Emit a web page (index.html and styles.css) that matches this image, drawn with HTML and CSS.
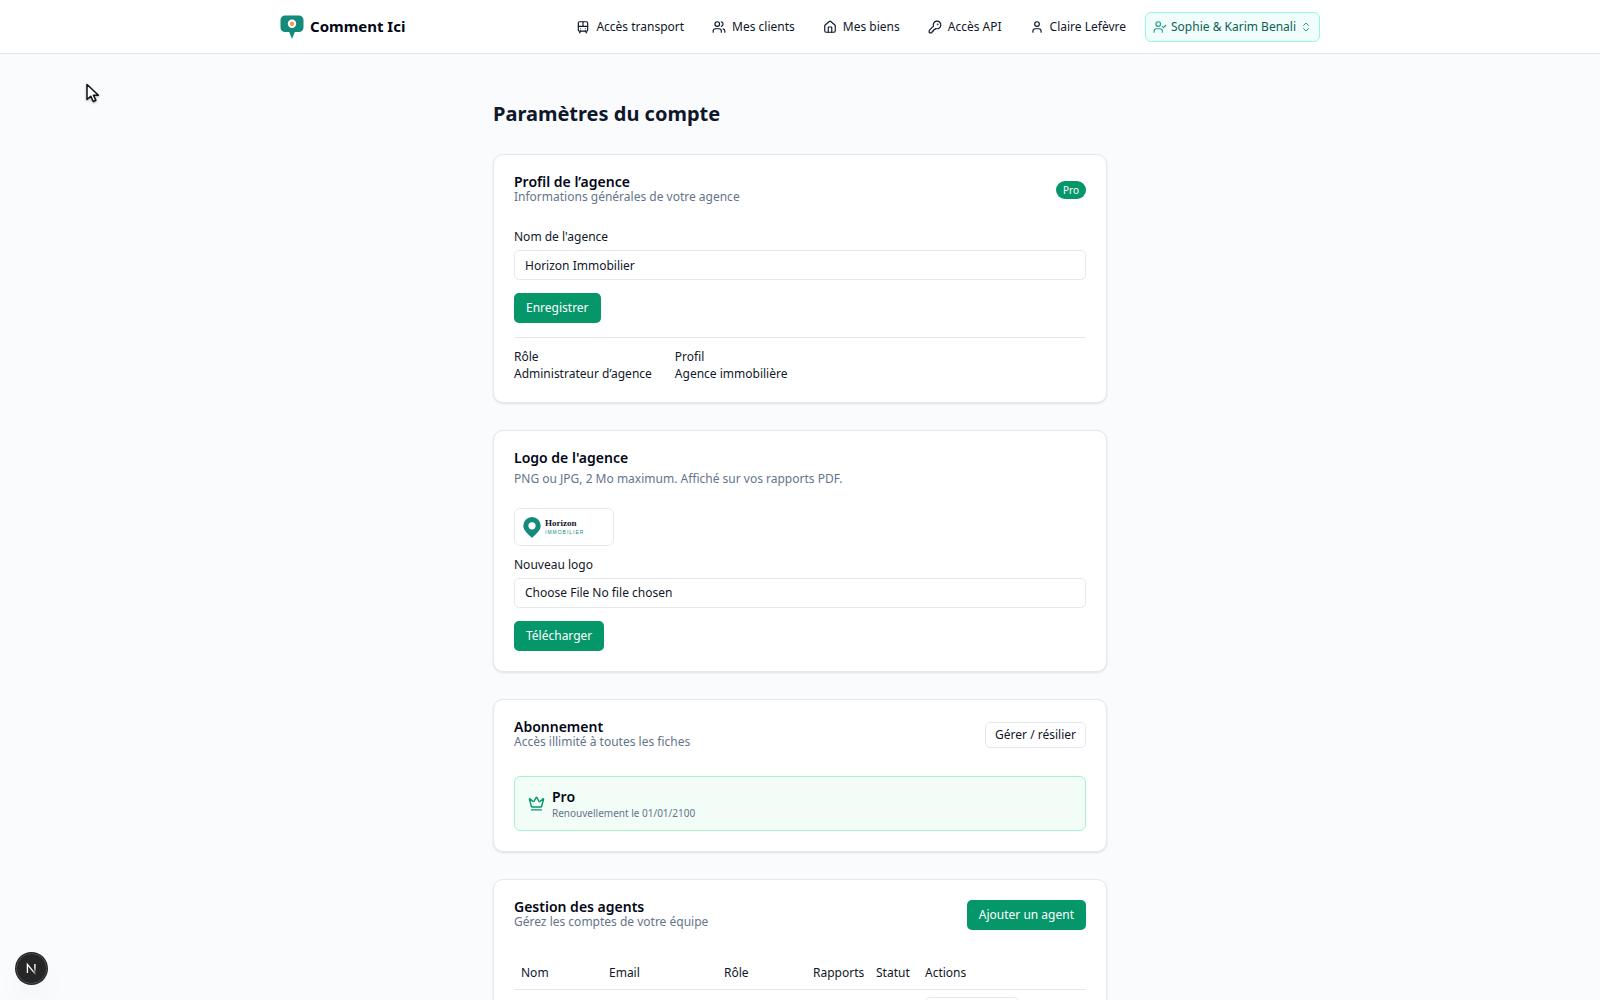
FILE: index.html
```html
<!DOCTYPE html>
<html lang="fr">
<head>
    <meta charset="UTF-8">
    <meta name="viewport" content="width=device-width, initial-scale=1.0">
    <title>Paramètres du compte</title>
    <link rel="stylesheet" href="styles.css">
</head>
<body>
    <header class="site-header">
        <div class="header-inner">
            <a href="#" class="brand">
                <svg class="brand-icon" viewBox="0 0 24 24">
                    <path d="M5 0.500h14a4.500 4.500 0 0 1 4.500 4.500v7.500a4.500 4.500 0 0 1-4.500 4.500h-4.200L12 24l-2.800-7H5a4.500 4.500 0 0 1-4.500-4.500V5A4.500 4.500 0 0 1 5 0.500z" fill="#148a7b"/>
                    <circle cx="12" cy="8.700" r="4.200" fill="#fff"/>
                    <circle cx="12" cy="8.700" r="2.200" fill="#ee9b4a"/>
                </svg>
                Comment Ici
            </a>

            <nav class="nav">
                <a href="#" class="nav-link">
                    <svg class="icon" viewBox="0 0 24 24"><rect width="16" height="16" x="4" y="3" rx="2"/><path d="M4 11h16"/><path d="M12 3v8"/><path d="m8 19-2 3"/><path d="m18 22-2-3"/><path d="M8 15h.01"/><path d="M16 15h.01"/></svg>
                    Accès transport
                </a>
                <a href="#" class="nav-link">
                    <svg class="icon" viewBox="0 0 24 24"><path d="M16 21v-2a4 4 0 0 0-4-4H6a4 4 0 0 0-4 4v2"/><circle cx="9" cy="7" r="4"/><path d="M22 21v-2a4 4 0 0 0-3-3.870"/><path d="M16 3.130a4 4 0 0 1 0 7.750"/></svg>
                    Mes clients
                </a>
                <a href="#" class="nav-link">
                    <svg class="icon" viewBox="0 0 24 24"><path d="M15 21v-8a1 1 0 0 0-1-1h-4a1 1 0 0 0-1 1v8"/><path d="M3 10a2 2 0 0 1 .709-1.528l7-5.999a2 2 0 0 1 2.582 0l7 5.999A2 2 0 0 1 21 10v9a2 2 0 0 1-2 2H5a2 2 0 0 1-2-2z"/></svg>
                    Mes biens
                </a>
                <a href="#" class="nav-link">
                    <svg class="icon" viewBox="0 0 24 24"><path d="M2.586 17.414A2 2 0 0 0 2 18.828V21a1 1 0 0 0 1 1h3a1 1 0 0 0 1-1v-1a1 1 0 0 1 1-1h1a1 1 0 0 0 1-1v-1a1 1 0 0 1 1-1h.172a2 2 0 0 0 1.414-.586l.814-.814a6.500 6.500 0 1 0-4-4z"/><circle cx="16.500" cy="7.500" r=".5"/></svg>
                    Accès API
                </a>
                <a href="#" class="nav-link">
                    <svg class="icon" viewBox="0 0 24 24"><path d="M19 21v-2a4 4 0 0 0-4-4H9a4 4 0 0 0-4 4v2"/><circle cx="12" cy="7" r="4"/></svg>
                    Claire Lefèvre
                </a>
                <button type="button" class="client-switch">
                    <svg class="icon" viewBox="0 0 24 24"><path d="M16 21v-2a4 4 0 0 0-4-4H6a4 4 0 0 0-4 4v2"/><circle cx="9" cy="7" r="4"/><path d="m16 11 2 2 4-4"/></svg>
                    <span>Sophie &amp; Karim Benali</span>
                    <svg class="icon chevrons" viewBox="0 0 24 24"><path d="m7 15 5 5 5-5"/><path d="m7 9 5-5 5 5"/></svg>
                </button>
            </nav>
        </div>
    </header>

    <main class="page">
        <h1>Paramètres du compte</h1>

        <section class="card">
            <div class="card-header">
                <div>
                    <h2>Profil de l’agence</h2>
                    <p class="muted">Informations générales de votre agence</p>
                </div>
                <span class="badge">Pro</span>
            </div>
            <form class="form">
                <div class="field">
                    <label for="agency-name">Nom de l'agence</label>
                    <input type="text" id="agency-name" class="input" value="Horizon Immobilier">
                </div>
                <button type="button" class="btn">Enregistrer</button>
            </form>
            <dl class="details">
                <div>
                    <dt>Rôle</dt>
                    <dd>Administrateur d’agence</dd>
                </div>
                <div>
                    <dt>Profil</dt>
                    <dd>Agence immobilière</dd>
                </div>
            </dl>
        </section>

        <section class="card">
            <div class="card-header stacked">
                <h2>Logo de l'agence</h2>
                <p class="muted">PNG ou JPG, 2 Mo maximum. Affiché sur vos rapports PDF.</p>
            </div>
            <form class="form">
                <div class="logo-preview">
                    <svg class="logo-pin" viewBox="0 0 18 21"><path fill-rule="evenodd" d="M9 0a8.700 8.700 0 0 1 8.700 8.700c0 5-5 8.300-8.700 12.300C5.300 17 .3 13.700.3 8.700A8.700 8.700 0 0 1 9 0zm0 5.200a3.600 3.600 0 1 0 0 7.200 3.600 3.600 0 0 0 0-7.200z"/></svg>
                    <div class="logo-text">
                        <span class="logo-name">Horizon</span>
                        <span class="logo-sub">IMMOBILIER</span>
                    </div>
                </div>
                <div class="field">
                    <label for="agency-logo">Nouveau logo</label>
                    <input type="file" id="agency-logo" class="input" lang="en">
                </div>
                <button type="button" class="btn">Télécharger</button>
            </form>
        </section>

        <section class="card">
            <div class="card-header">
                <div>
                    <h2>Abonnement</h2>
                    <p class="muted">Accès illimité à toutes les fiches</p>
                </div>
                <button type="button" class="btn-outline">Gérer / résilier</button>
            </div>
            <div class="plan">
                <svg class="plan-icon" viewBox="0 0 24 24"><path d="M11.562 3.266a.5.5 0 0 1 .876 0L15.390 8.870a1 1 0 0 0 1.516.294L21.183 5.500a.5.5 0 0 1 .798.519l-2.834 10.246a1 1 0 0 1-.956.734H5.810a1 1 0 0 1-.957-.734L2.020 6.020a.5.5 0 0 1 .798-.519l4.276 3.664a1 1 0 0 0 1.516-.294z"/><path d="M5 21h14"/></svg>
                <div>
                    <p class="plan-name">Pro</p>
                    <p class="plan-date">Renouvellement le 01/01/2100</p>
                </div>
            </div>
        </section>

        <section class="card">
            <div class="card-header">
                <div>
                    <h2>Gestion des agents</h2>
                    <p class="muted">Gérez les comptes de votre équipe</p>
                </div>
                <button type="button" class="btn">Ajouter un agent</button>
            </div>
            <table class="agents">
                <thead>
                    <tr>
                        <th class="col-name">Nom</th>
                        <th class="col-email">Email</th>
                        <th class="col-role">Rôle</th>
                        <th class="col-reports">Rapports</th>
                        <th class="col-status">Statut</th>
                        <th>Actions</th>
                    </tr>
                </thead>
                <tbody>
                    <tr>
                        <td></td>
                        <td></td>
                        <td></td>
                        <td></td>
                        <td></td>
                        <td><button type="button" class="btn-outline row-action"></button></td>
                    </tr>
                </tbody>
            </table>
        </section>
    </main>

    <button type="button" class="dev-badge">
        <svg viewBox="0 0 32 32">
            <defs>
                <linearGradient id="fade-diagonal" x1="0" y1="0" x2="1" y2="1">
                    <stop offset="0.600" stop-color="#fff"/>
                    <stop offset="1" stop-color="#fff" stop-opacity="0.200"/>
                </linearGradient>
                <linearGradient id="fade-stem" x1="0" y1="0" x2="0" y2="1">
                    <stop offset="0.400" stop-color="#fff"/>
                    <stop offset="1" stop-color="#fff" stop-opacity="0.100"/>
                </linearGradient>
            </defs>
            <path d="M11.500 21V11.500l9 11" fill="none" stroke="url(#fade-diagonal)" stroke-width="1.500"/>
            <rect x="19" y="11" width="1.500" height="10" fill="url(#fade-stem)"/>
        </svg>
    </button>

    <svg class="cursor" viewBox="0 0 16 22">
        <path d="M2 1.500v15l3.700-3.300 2.600 5.300 2.600-1.200-2.500-5.100h5z" fill="#fff" stroke="#111" stroke-width="1.500" stroke-linejoin="round"/>
    </svg>
</body>
</html>
```
FILE: styles.css
```css
* {
    box-sizing: border-box;
}
body {
    margin: 0;
    font-family: "Noto Sans", sans-serif;
    font-size: 12px;
    line-height: 17px;
    color: #0f172a;
    background-color: #fafbfd;
}
h1, h2, p, dl, dd {
    margin: 0;
}
button, input {
    font: inherit;
    color: inherit;
}
button {
    cursor: pointer;
}

/* Header */
.site-header {
    background: white;
    border-bottom: 1px solid #e5e8ee;
}
.header-inner {
    display: flex;
    align-items: center;
    justify-content: space-between;
    max-width: 1040px;
    height: 53px;
    margin: 0 auto;
}
.brand {
    display: flex;
    align-items: center;
    gap: 6px;
    font-size: 15px;
    font-weight: 700;
    color: #020617;
    text-decoration: none;
}
.brand-icon {
    width: 24px;
    height: 24px;
}
.nav {
    display: flex;
    align-items: center;
    gap: 10px;
}
.nav-link {
    display: flex;
    align-items: center;
    gap: 6px;
    padding: 0 9px;
    color: inherit;
    text-decoration: none;
}
.icon {
    width: 14px;
    height: 14px;
    fill: none;
    stroke: currentColor;
    stroke-width: 2;
    stroke-linecap: round;
    stroke-linejoin: round;
}
.client-switch {
    display: flex;
    align-items: center;
    gap: 4px;
    height: 30px;
    padding: 0 7px;
    color: #115e59;
    background: #f0fdfa;
    border: 1px solid #99f6e4;
    border-radius: 6px;
}
.client-switch .icon {
    color: #2a9d8f;
}
.client-switch .chevrons {
    width: 12px;
    height: 12px;
}

/* Content */
.page {
    max-width: 614px;
    margin: 0 auto;
    padding: 46px 0 41px;
    display: flex;
    flex-direction: column;
    gap: 27px;
}
h1 {
    font-size: 20px;
    line-height: 27px;
    font-weight: 700;
}
h2 {
    font-size: 14px;
    line-height: 14px;
    font-weight: 600;
    color: #020617;
}
.card {
    padding: 20px;
    background: white;
    border: 1px solid #e5e8ee;
    border-radius: 10px;
    box-shadow: 0 1px 2px rgba(15, 23, 42, 0.12);
}
.card-header {
    display: flex;
    justify-content: space-between;
    min-height: 30px;
    margin-bottom: 26px;
}
.card-header.stacked {
    flex-direction: column;
    justify-content: flex-start;
    gap: 6px;
    margin-bottom: 22px;
}
.card-header .badge,
.card-header button {
    align-self: center;
}
.muted {
    line-height: 15px;
    color: #64748b;
}
.badge {
    padding: 0 7px;
    font-size: 10px;
    line-height: 18px;
    color: white;
    background: #059669;
    border-radius: 9px;
}

/* Forms */
.form {
    display: flex;
    flex-direction: column;
    align-items: flex-start;
    gap: 13px;
}
.field {
    display: flex;
    flex-direction: column;
    gap: 7px;
    width: 100%;
}
.field label {
    line-height: 12px;
}
.input {
    width: 100%;
    height: 30px;
    padding: 0 10px;
    line-height: 28px;
    background: white;
    border: 1px solid #e5e8ee;
    border-radius: 5px;
}
.input::file-selector-button {
    margin: 0;
    margin-inline-end: 3px;
    padding: 0;
    font: inherit;
    color: inherit;
    background: transparent;
    border: 0;
}
.btn {
    height: 30px;
    padding: 0 12px 1px;
    color: white;
    background: #059669;
    border: 0;
    border-radius: 5px;
}
.btn-outline {
    height: 26px;
    padding: 0 9px 1px;
    background: white;
    border: 1px solid #e5e8ee;
    border-radius: 5px;
}
.details {
    display: flex;
    gap: 23px;
    margin-top: 14px;
    padding-top: 10px;
    border-top: 1px solid #e5e8ee;
}
.logo-preview {
    display: flex;
    align-items: center;
    gap: 4px;
    width: 100px;
    height: 38px;
    padding: 0 8px;
    border: 1px solid #e5e8ee;
    border-radius: 6px;
}
.logo-pin {
    width: 18px;
    height: 21px;
    fill: #148a7b;
}
.logo-text {
    display: flex;
    flex-direction: column;
}
.logo-name {
    font-family: "Liberation Serif", serif;
    font-size: 9px;
    line-height: 10px;
    font-weight: 700;
}
.logo-sub {
    font-family: "Liberation Sans", sans-serif;
    font-size: 5px;
    line-height: 8px;
    letter-spacing: 1px;
    color: #148a7b;
}

/* Subscription */
.plan {
    display: flex;
    align-items: center;
    gap: 7px;
    padding: 10px 13px;
    background: #f2fdf8;
    border: 1px solid #a7f3d0;
    border-radius: 6px;
}
.plan-icon {
    width: 17px;
    height: 17px;
    fill: none;
    stroke: #059669;
    stroke-width: 2;
    stroke-linecap: round;
    stroke-linejoin: round;
}
.plan-name {
    font-size: 14px;
    line-height: 20px;
    font-weight: 600;
    color: #020617;
}
.plan-date {
    font-size: 10px;
    line-height: 13px;
    color: #64748b;
}

/* Agents table */
.agents {
    width: 100%;
    table-layout: fixed;
    border-collapse: collapse;
}
.agents th {
    height: 33px;
    padding: 0 7px;
    font-weight: 400;
    text-align: left;
    border-bottom: 1px solid #e5e8ee;
}
.agents td {
    padding: 7px;
}
.col-name {
    width: 88px;
}
.col-email {
    width: 115px;
}
.col-role {
    width: 89px;
}
.col-reports {
    width: 63px;
}
.col-status {
    width: 49px;
}
.row-action {
    width: 94px;
}

/* Overlays */
.dev-badge {
    position: fixed;
    left: 16px;
    bottom: 16px;
    width: 31px;
    height: 31px;
    padding: 0;
    background: #262626;
    border: 1px solid #4a4a4a;
    border-radius: 50%;
    box-shadow: 0 0 0 1px #262626, 0 16px 32px -8px rgba(0, 0, 0, 0.14);
}
.dev-badge svg {
    display: block;
    width: 100%;
}
.cursor {
    position: absolute;
    left: 85px;
    top: 83px;
    width: 16px;
    height: 22px;
    filter: drop-shadow(0 1px 1px rgba(0, 0, 0, 0.3));
}
```
